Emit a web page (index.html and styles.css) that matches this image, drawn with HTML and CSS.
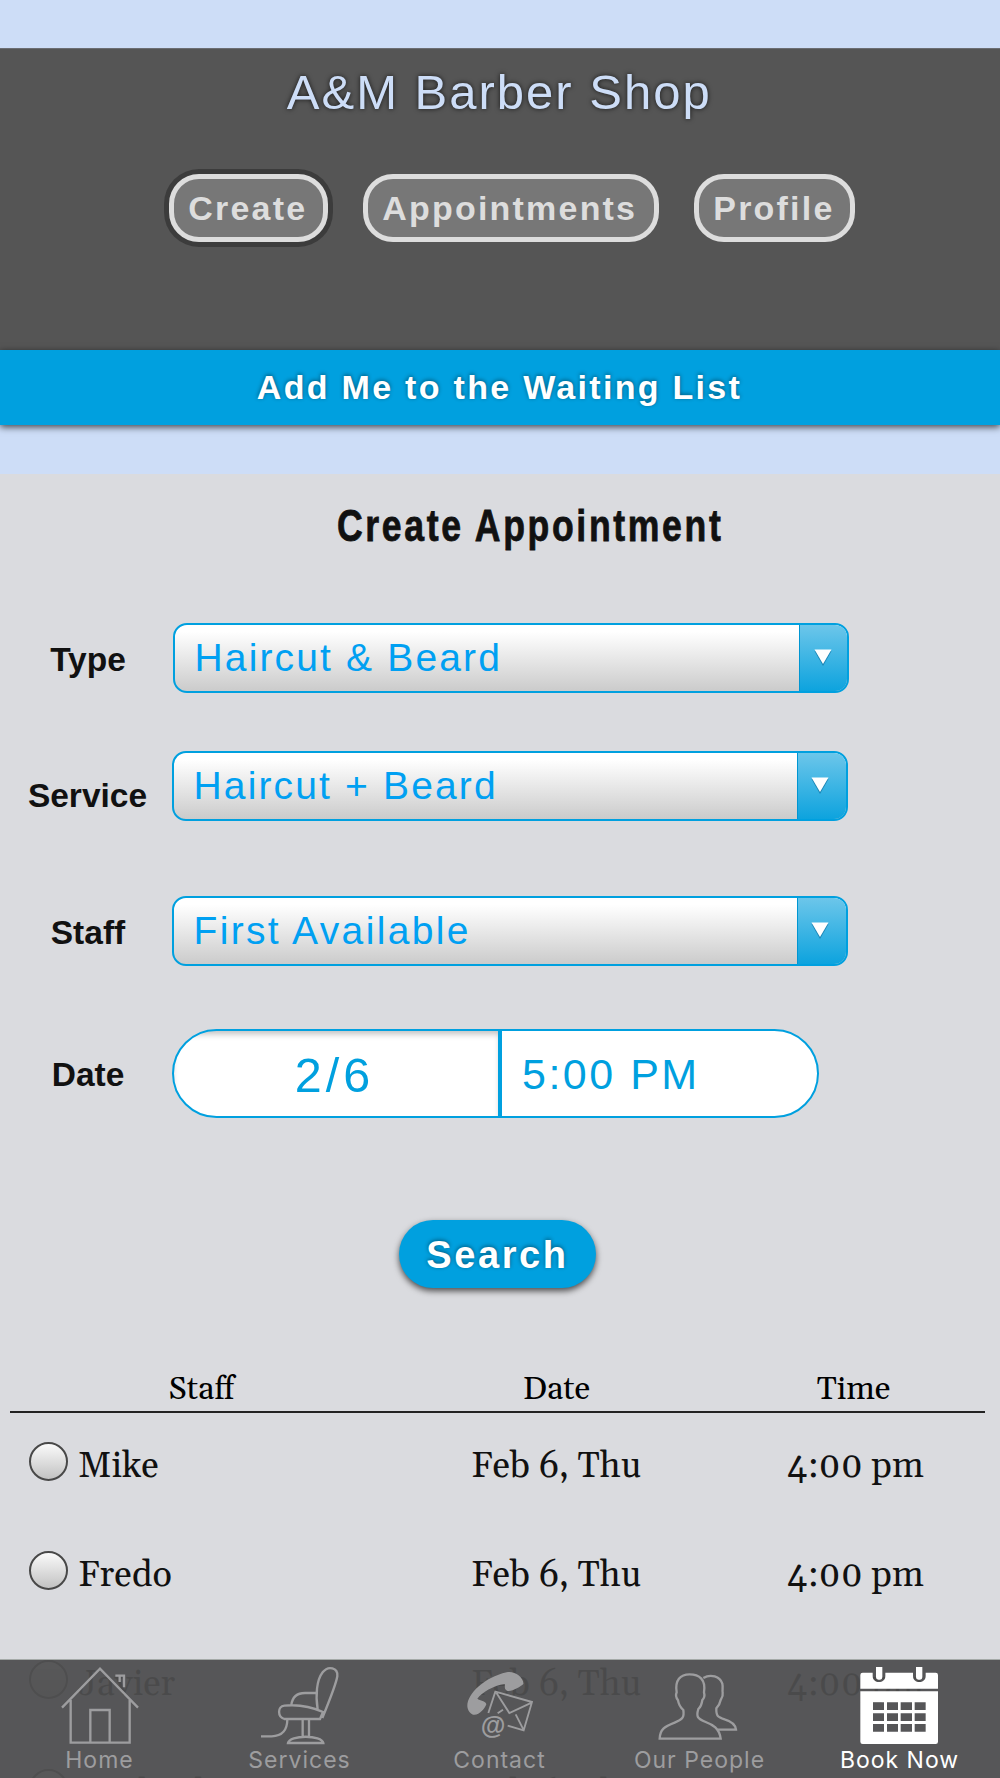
FILE: index.html
```html
<!DOCTYPE html>
<html lang="en">
<head>
<meta charset="utf-8">
<title>A&amp;M Barber Shop</title>
<link rel="stylesheet" href="styles.css">
</head>
<body>
<div class="screen">
  <header class="header">
    <h1 class="title">A&amp;M Barber Shop</h1>
    <nav class="pills">
      <button class="pill pill-create active">Create</button>
      <button class="pill pill-appts">Appointments</button>
      <button class="pill pill-profile">Profile</button>
    </nav>
  </header>
  <button class="waiting">Add Me to the Waiting List</button>
  <main class="main">
    <h2 class="heading"><span>Create Appointment</span></h2>
    <form class="form">
      <div class="row row-type">
        <label class="label">Type</label>
        <div class="select"><span class="value">Haircut &amp; Beard</span><span class="drop"><svg width="18" height="18" viewBox="0 0 18 18"><path class="arrow-shade" d="M.5 2h17L9 17z"/><path class="arrow" d="M.5.5h17L9 15z"/></svg></span></div>
      </div>
      <div class="row row-service">
        <label class="label">Service</label>
        <div class="select"><span class="value">Haircut + Beard</span><span class="drop"><svg width="18" height="18" viewBox="0 0 18 18"><path class="arrow-shade" d="M.5 2h17L9 17z"/><path class="arrow" d="M.5.5h17L9 15z"/></svg></span></div>
      </div>
      <div class="row row-staff">
        <label class="label">Staff</label>
        <div class="select"><span class="value">First Available</span><span class="drop"><svg width="18" height="18" viewBox="0 0 18 18"><path class="arrow-shade" d="M.5 2h17L9 17z"/><path class="arrow" d="M.5.5h17L9 15z"/></svg></span></div>
      </div>
      <div class="row row-date">
        <label class="label">Date</label>
        <div class="datetime"><span class="date">2/6</span><span class="time">5:00 PM</span></div>
      </div>
      <button class="search" type="button">Search</button>
    </form>
    <div class="results">
      <div class="res-head"><span>Staff</span><span>Date</span><span>Time</span></div>
      <div class="res"><i class="radio"></i><span class="name">Mike</span><span class="day">Feb 6, Thu</span><span class="hour">4:00 pm</span></div>
      <div class="res"><i class="radio"></i><span class="name">Fredo</span><span class="day">Feb 6, Thu</span><span class="hour">4:00 pm</span></div>
      <div class="res"><i class="radio"></i><span class="name">Javier</span><span class="day">Feb 6, Thu</span><span class="hour">4:00 pm</span></div>
      <div class="res"><i class="radio"></i><span class="name">Michael</span><span class="day">Feb 6, Thu</span><span class="hour">4:00 pm</span></div>
    </div>
  </main>
  <nav class="tabs">
    <a class="tab"><svg class="icon line" viewBox="150 60 300 270"><path d="M186 203L300 86L414 203M212 180V308H389V180M271 306V210H329V306M346 107H372V142M359 107V126"/></svg><span>Home</span></a>
    <a class="tab"><svg class="icon line" viewBox="750 60 300 270"><path d="M783 289H815C848 289 862 268 862 238M853 237C832 231 832 199 853 197C900 192 940 203 969 216L960 237ZM874 195C877 171 892 159 915 159H948M953 208C946 165 950 120 968 97C985 75 1014 84 1012 108C1010 124 985 190 967 234M908 239V288M927 239V288M864 309C868 284 966 284 970 309Z"/></svg><span>Services</span></a>
    <a class="tab"><svg class="icon" viewBox="360 60 300 270"><path class="fill" d="M413 205C404 171 457 113 530 97C552 91 582 112 580 132C572 140 545 156 531 152C521 147 526 137 524 132C490 136 456 158 442 176C450 183 467 181 469 193C464 207 446 228 429 224C420 221 415 213 413 205Z"/><path class="thin" d="M475 219L496 155L606 186L581 271L533 257M499 158L538 219L605 188M557 223L580 268M503 220L519 209"/><text class="at" x="490" y="282" text-anchor="middle">@</text></svg><span>Contact</span></a>
    <a class="tab"><svg class="icon line" viewBox="-30 60 300 270"><path d="M-1 296H182C178 264 158 254 137 246C112 236 108 230 115 207C124 199 126 188 127 180C135 172 134 164 132 157C138 117 117 103 89 103C61 103 44 121 50 157C46 166 50 176 54 181C56 193 61 202 70 210C73 231 69 238 44 248C13 260 0 268-1 296ZM130 114C152 101 180 109 187 131C190 144 186 151 188 158C190 169 184 177 182 180C180 192 175 198 169 205C168 229 174 231 194 238C217 245 227 256 228 269H172"/></svg><span>Our People</span></a>
    <a class="tab current"><svg class="icon" viewBox="570 60 300 270"><path class="page" fill-rule="evenodd" d="M608 98H638V108C638 132 676 132 676 108V98H759V108C759 132 797 132 797 108V98H827Q834 98 834 105V146H601V105Q601 98 608 98ZM601 154H834V305Q834 312 827 312H608Q601 312 601 305ZM639 187V210H672V187ZM681 187V210H714V187ZM722 187V210H756V187ZM764 187V210H797V187ZM639 220V243H672V220ZM681 220V243H714V220ZM722 220V243H756V220ZM764 220V243H797V220ZM639 252V275H672V252ZM681 252V275H714V252ZM722 252V275H756V252ZM764 252V275H797V252Z"/><path class="page" d="M648 81H667V112Q667 119 660 119H655Q648 119 648 112ZM768 81H787V112Q787 119 780 119H775Q768 119 768 112Z"/></svg><span>Book Now</span></a>
  </nav>
</div>
</body>
</html>
```
FILE: styles.css
```css
* { box-sizing: border-box; }
body { margin: 0; background: #dadbdf; font-family: "Liberation Sans", Arial, sans-serif; color: #111; }
button { font: inherit; padding: 0; margin: 0; border: 0; }
.screen { width: 1000px; height: 1778px; overflow: hidden; display: flex; flex-direction: column; background: #cdddf7; padding-top: 48px; }
.header { height: 302px; background: #555; border-top: 1px solid #6b6d73; display: flex; flex-direction: column; flex: none; }
.title { margin: 15px 0 0; padding-right: 1.5px; height: 56px; line-height: 56px; font-size: 49px; font-weight: 400; letter-spacing: 2px; text-align: center; color: #cdddf7; text-shadow: 0 0 5px rgba(0,0,0,.75); }
.pills { display: flex; margin: 54px 0 0 169px; }
.pill { height: 68px; border: 5px solid #ddd; border-radius: 30px; background: #777; color: #ddd; font-size: 34px; font-weight: 700; letter-spacing: 2.2px; line-height: 58px; text-align: left; padding-left: 14.3px; white-space: nowrap; }
.pill.active { box-shadow: 0 0 0 5px #3c3c3c; }
.pill-create { width: 159px; }
.pill-appts { width: 296px; margin-left: 35px; }
.pill-profile { width: 161px; margin-left: 35px; }
.waiting { flex: none; position: relative; height: 75px; padding-right: 1px; background: #00a0df; color: #fff; font-size: 34px; font-weight: 700; letter-spacing: 2.3px; text-shadow: 0 -1px 4px rgba(0,0,0,.45); box-shadow: 0 2px 7px rgba(0,0,0,.7); }
.main { flex: none; margin-top: 49px; height: 1304px; background: #dadbdf; }
.heading { margin: 0; padding: 27px 0 0 337px; height: 148px; font: 700 44.5px/50px "Liberation Sans", sans-serif; letter-spacing: 3.3px; white-space: nowrap; }
.heading span { display: inline-block; transform: scaleX(.8); transform-origin: 0 50%; -webkit-text-stroke: .8px #111; }
.form { display: flex; flex-direction: column; }
.row { display: flex; height: 70px; }
.label { width: 172px; flex: none; text-align: center; font-size: 33.5px; font-weight: 700; line-height: 40px; padding-top: 17px; padding-left: 4px; }
.select { width: 676px; height: 70px; border: 2px solid #00a0df; border-radius: 14px; display: flex; overflow: hidden; background: linear-gradient(#fff 10%, #cbcbcb); }
.value { flex: 1; padding-left: 19.5px; color: #00a0f2; font-size: 39px; letter-spacing: 2.15px; line-height: 66px; white-space: nowrap; }
.drop { width: 49px; padding-right: 5px; border-left: 1px solid #0096d2; display: flex; align-items: center; justify-content: center; background: linear-gradient(#6cc6ea, #0da3de); }
.arrow { fill: #fff; }
.arrow-shade { fill: #1a84b4; }
.row-type { margin-top: 1px; }
.row-type .select { margin-left: 1px; }
.row-type .drop { width: 48px; padding-right: 2px; }
.row-service { margin-top: 58px; }
.row-service .label { padding-top: 25px; padding-left: 3px; }
.row-staff { margin-top: 75px; }
.row-staff .value { letter-spacing: 2.35px; }
.row-date { margin-top: 63px; height: 89px; }
.row-date .label { padding-top: 26px; }
.datetime { width: 647px; height: 89px; border: 2px solid #00a0df; border-radius: 45px; overflow: hidden; background: #fff; display: flex; color: #00a0df; }
.date { width: 328px; padding-right: 3px; border-right: 4px solid #00a0df; text-align: center; font-size: 48.5px; letter-spacing: 4px; line-height: 88px; box-shadow: inset 0 5px 6px -2px rgba(0,0,0,.25); }
.time { padding-left: 20px; font-size: 43px; letter-spacing: 2.5px; line-height: 86px; }
.search { width: 197px; height: 68px; margin: 102px 0 0 399px; padding-top: 2px; border-radius: 34px; background: #00a0df; color: #fff; font-size: 38px; font-weight: 700; letter-spacing: 2.6px; text-shadow: 0 -1px 4px rgba(0,0,0,.45); box-shadow: 0 3px 6px rgba(0,0,0,.65); }
.results { margin: 77px 15px 0 10px; font-family: Gelasio, Georgia, "Liberation Serif", serif; }
.res-head { height: 48px; border-bottom: 2px solid #222; display: grid; grid-template-columns: 383px 327px 267px; font-size: 32.4px; line-height: 49px; text-align: center; color: #000; }
.res { height: 109px; display: flex; align-items: flex-start; padding: 29px 0 0 19px; font-size: 36px; line-height: 44px; white-space: nowrap; }
.radio { flex: none; width: 39px; height: 39px; border: 2px solid #484848; border-radius: 50%; background: linear-gradient(#fafafa, #c2c2c2); }
.name { width: 403px; padding-left: 10px; padding-top: 3px; }
.day { width: 316px; padding-top: 3px; }
.hour { padding-top: 3px; }
.tabs { position: absolute; top: 1660px; left: 0; width: 1000px; height: 118px; display: grid; grid-template-columns: repeat(5, 200px); background: rgba(78,78,79,.945); box-shadow: 0 -1px 0 #a5aaa8; }
.tab { display: flex; flex-direction: column; align-items: center; font: 23px/28px Inter, sans-serif; letter-spacing: 1px; color: #9d9d9f; white-space: nowrap; }
.icon { width: 100px; height: 90px; flex: none; }
.tab span { margin-top: -4px; padding-right: 1px; }
.line path { fill: none; stroke: #9d9d9f; stroke-width: 7; }
.thin { fill: none; stroke: #9d9d9f; stroke-width: 5.5; }
.fill { fill: #9d9d9f; }
.at { font: 700 76px "Liberation Sans", sans-serif; fill: #9d9d9f; }
.page { fill: #fff; }
.current { color: #fff; }
```
